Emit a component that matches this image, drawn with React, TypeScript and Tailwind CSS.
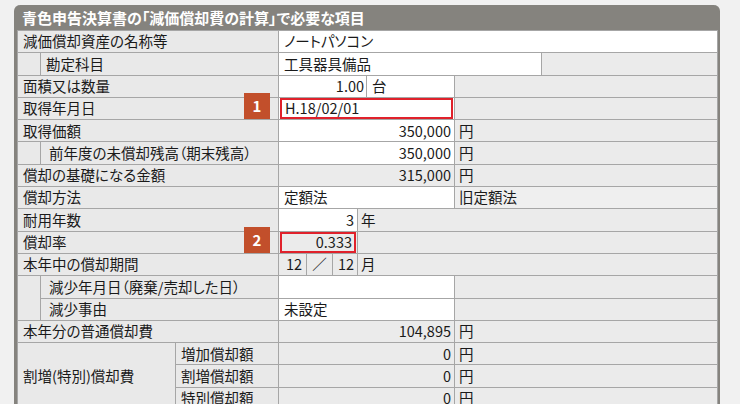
import type { ReactNode } from 'react'

// 罫線・背景色
const cell = 'border border-[#a6a6a6] p-0 align-middle whitespace-nowrap'
const labelBg = 'bg-[#e9e9e9]'
const grayBg = 'bg-[#ebebeb]'

interface CellProps {
  children?: ReactNode
  span?: number
  rows?: number
  className?: string
}

const Label = ({ children, span = 3, rows, className = '' }: CellProps) => (
  <td colSpan={span} rowSpan={rows} className={`${cell} ${labelBg} pl-[5px] ${className}`}>
    {children}
  </td>
)

const White = ({ children, span = 1, className = '' }: CellProps) => (
  <td colSpan={span} className={`${cell} bg-white ${className}`}>
    {children}
  </td>
)

const Gray = ({ children, span = 1, className = '' }: CellProps) => (
  <td colSpan={span} className={`${cell} ${grayBg} ${className}`}>
    {children}
  </td>
)

const Badge = ({ n }: { n: string }) => (
  <span className="absolute right-[8px] -top-[5px] z-10 flex h-[26px] w-[26px] items-center justify-center bg-[#c24f2b] text-[15px] font-bold text-white">
    {n}
  </span>
)

const Indent = ({ rows }: { rows?: number }) => (
  <td rowSpan={rows} className={`${cell} ${labelBg}`} />
)

export default function App() {
  return (
    <div className="h-[404px] w-[740px] overflow-hidden bg-[#f1f1f1] pl-[14px] pt-[5px] font-['Noto_Sans_CJK_JP',sans-serif] text-[14.5px] leading-none text-[#1a1a1a] [font-feature-settings:'palt']">
      <div className="w-[706px] rounded-t-[6px] border-x-[3px] border-[#85837e] bg-[#85837e]">
        {/* タイトル */}
        <div className="flex h-[25px] items-center pl-[5px] text-[15px] font-bold text-white">
          青色申告決算書の「減価償却費の計算」で必要な項目
        </div>

        <table className="w-[700px] table-fixed border-collapse bg-white">
          <colgroup>
            <col className="w-[23px]" />
            <col className="w-[135px]" />
            <col className="w-[103px]" />
            <col className="w-[28px]" />
            <col className="w-[26px]" />
            <col className="w-[25px]" />
            <col className="w-[9px]" />
            <col className="w-[88px]" />
            <col className="w-[87px]" />
            <col className="w-[176px]" />
          </colgroup>
          <tbody>
            <tr className="h-[22.3px]">
              <Label>減価償却資産の名称等</Label>
              <White span={7} className="pl-[5px]">ノートパソコン</White>
            </tr>
            <tr className="h-[22.3px]">
              <Indent />
              <Label span={2} className="pl-[3px]">勘定科目</Label>
              <White span={6} className="pl-[5px]">工具器具備品</White>
              <Gray />
            </tr>
            <tr className="h-[22.3px]">
              <Label>面積又は数量</Label>
              <White span={4} className="pr-[2px] text-right">1.00</White>
              <White className="pl-[5px]">台</White>
              <Gray span={2} />
            </tr>
            <tr className="h-[22.3px]">
              <Label className="relative">
                取得年月日
                <Badge n="1" />
              </Label>
              <White span={5} className="px-px">
                <div className="flex h-[21px] items-center border-2 border-[#e0212b] pl-[3px]">H.18/02/01</div>
              </White>
              <Gray span={2} />
            </tr>
            <tr className="h-[22.3px]">
              <Label>取得価額</Label>
              <White span={5} className="pr-[3px] text-right">350,000</White>
              <Gray span={2} className="pl-[4px]">円</Gray>
            </tr>
            <tr className="h-[22.3px]">
              <Indent />
              <Label span={2} className="pl-[8px]">前年度の未償却残高（期末残高）</Label>
              <White span={5} className="pr-[3px] text-right">350,000</White>
              <Gray span={2} className="pl-[4px]">円</Gray>
            </tr>
            <tr className="h-[22.3px]">
              <Label>償却の基礎になる金額</Label>
              <Gray span={5} className="pr-[3px] text-right">315,000</Gray>
              <Gray span={2} className="pl-[4px]">円</Gray>
            </tr>
            <tr className="h-[22.3px]">
              <Label>償却方法</Label>
              <White span={5} className="pl-[5px]">定額法</White>
              <Gray span={2} className="bg-[#efefef] pl-[4px]">旧定額法</Gray>
            </tr>
            <tr className="h-[22.3px]">
              <Label>耐用年数</Label>
              <White span={3} className="pr-[3px] text-right">3</White>
              <Gray span={4} className="pl-[3px]">年</Gray>
            </tr>
            <tr className="h-[22.3px]">
              <Label className="relative">
                償却率
                <Badge n="2" />
              </Label>
              <Gray span={3} className="px-px">
                <div className="flex h-[21px] items-center justify-end border-2 border-[#e0212b] pr-[2px]">0.333</div>
              </Gray>
              <Gray span={4} />
            </tr>
            <tr className="h-[22.3px]">
              <Label>本年中の償却期間</Label>
              <Gray className="pr-[4px] text-right">12</Gray>
              <Gray className="text-center">／</Gray>
              <Gray className="pr-[3px] text-right">12</Gray>
              <Gray span={4} className="pl-[3px]">月</Gray>
            </tr>
            <tr className="h-[22.3px]">
              <Indent rows={2} />
              <Label span={2} className="pl-[8px]">減少年月日（廃棄/売却した日）</Label>
              <White span={5} />
              <Gray span={2} />
            </tr>
            <tr className="h-[22.3px]">
              <Label span={2} className="pl-[8px]">減少事由</Label>
              <White span={5} className="pl-[5px]">未設定</White>
              <Gray span={2} />
            </tr>
            <tr className="h-[22.3px]">
              <Label>本年分の普通償却費</Label>
              <Gray span={5} className="pr-[3px] text-right">104,895</Gray>
              <Gray span={2} className="pl-[4px]">円</Gray>
            </tr>
            <tr className="h-[22.3px]">
              <Label span={2} rows={3}>割増(特別)償却費</Label>
              <Label span={1}>増加償却額</Label>
              <Gray span={5} className="pr-[3px] text-right">0</Gray>
              <Gray span={2} className="pl-[4px]">円</Gray>
            </tr>
            <tr className="h-[22.3px]">
              <Label span={1}>割増償却額</Label>
              <Gray span={5} className="pr-[3px] text-right">0</Gray>
              <Gray span={2} className="pl-[4px]">円</Gray>
            </tr>
            <tr className="h-[22.3px]">
              <Label span={1}>特別償却額</Label>
              <Gray span={5} className="pr-[3px] text-right">0</Gray>
              <Gray span={2} className="pl-[4px]">円</Gray>
            </tr>
          </tbody>
        </table>
      </div>
    </div>
  )
}
